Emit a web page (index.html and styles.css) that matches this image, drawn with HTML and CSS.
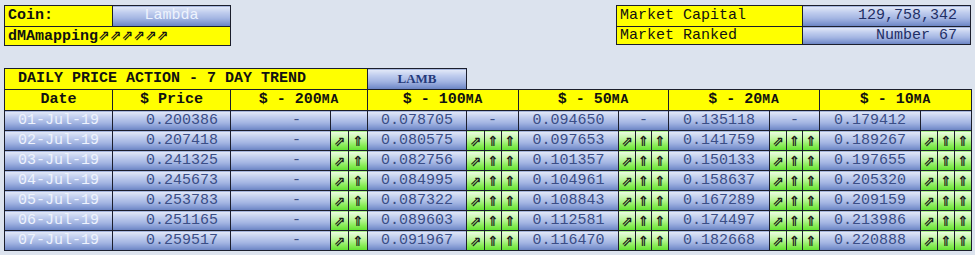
FILE: index.html
```html
<!DOCTYPE html>
<html>
<head>
<meta charset="utf-8">
<link rel="stylesheet" href="styles.css">
</head>
<body>
<div class="top">
  <table class="info info-left">
    <colgroup><col class="c108"><col class="c118"></colgroup>
    <tr class="r1"><td class="lbl">Coin:</td><td class="blue light center">Lambda</td></tr>
    <tr class="r2"><td class="lbl" colspan="2">dMAmapping<span class="arr">⇗⇗⇗⇗⇗⇗</span></td></tr>
  </table>
  <table class="info info-right">
    <colgroup><col class="c186"><col class="c168"></colgroup>
    <tr class="r1"><td class="lbl2">Market Capital</td><td class="blue val">129,758,342</td></tr>
    <tr class="r2"><td class="lbl2">Market Ranked</td><td class="blue val">Number 67</td></tr>
  </table>
</div>
<table class="grid">
  <colgroup>
    <col class="w108"><col class="w118">
    <col class="w100"><col class="w18"><col class="w19">
    <col class="w99"><col class="w18"><col class="w17"><col class="w17">
    <col class="w100"><col class="w17"><col class="w16"><col class="w17">
    <col class="w101"><col class="w17"><col class="w16"><col class="w17">
    <col class="w101"><col class="w17"><col class="w17"><col class="w17">
  </colgroup>
  <tr class="title">
    <td colspan="5" class="ttl">DAILY PRICE ACTION - 7 DAY TREND</td>
    <td class="blue lamb">LAMB</td>
    <td colspan="15" class="none"></td>
  </tr>
  <tr class="head">
    <td>Date</td><td>$ Price</td>
    <td colspan="3">$ - 200<span class="ma">MA</span></td>
    <td colspan="4">$ - 100<span class="ma">MA</span></td>
    <td colspan="4">$ - 50<span class="ma">MA</span></td>
    <td colspan="4">$ - 20<span class="ma">MA</span></td>
    <td colspan="4">$ - 10<span class="ma">MA</span></td>
  </tr>
  <tr class="row">
    <td class="blue date">01-Jul-19</td><td class="blue price">0.200386</td><td class="blue d200">-</td><td class="blue" colspan="2"></td>
    <td class="blue num">0.078705</td><td class="blue num" colspan="3">-</td>
    <td class="blue num">0.094650</td><td class="blue num" colspan="3">-</td>
    <td class="blue num">0.135118</td><td class="blue num" colspan="3">-</td>
    <td class="blue num">0.179412</td><td class="blue" colspan="3"></td>
  </tr>
  <tr class="row">
    <td class="blue date">02-Jul-19</td><td class="blue price">0.207418</td><td class="blue d200">-</td><td class="g">⇗</td><td class="g">⇑</td>
    <td class="blue num">0.080575</td><td class="g">⇗</td><td class="g">⇑</td><td class="g">⇑</td>
    <td class="blue num">0.097653</td><td class="g">⇗</td><td class="g">⇑</td><td class="g">⇑</td>
    <td class="blue num">0.141759</td><td class="g">⇗</td><td class="g">⇑</td><td class="g">⇑</td>
    <td class="blue num">0.189267</td><td class="g">⇗</td><td class="g">⇑</td><td class="g">⇑</td>
  </tr>
  <tr class="row">
    <td class="blue date">03-Jul-19</td><td class="blue price">0.241325</td><td class="blue d200">-</td><td class="g">⇗</td><td class="g">⇑</td>
    <td class="blue num">0.082756</td><td class="g">⇗</td><td class="g">⇑</td><td class="g">⇑</td>
    <td class="blue num">0.101357</td><td class="g">⇗</td><td class="g">⇑</td><td class="g">⇑</td>
    <td class="blue num">0.150133</td><td class="g">⇗</td><td class="g">⇑</td><td class="g">⇑</td>
    <td class="blue num">0.197655</td><td class="g">⇗</td><td class="g">⇑</td><td class="g">⇑</td>
  </tr>
  <tr class="row">
    <td class="blue date">04-Jul-19</td><td class="blue price">0.245673</td><td class="blue d200">-</td><td class="g">⇗</td><td class="g">⇑</td>
    <td class="blue num">0.084995</td><td class="g">⇗</td><td class="g">⇑</td><td class="g">⇑</td>
    <td class="blue num">0.104961</td><td class="g">⇗</td><td class="g">⇑</td><td class="g">⇑</td>
    <td class="blue num">0.158637</td><td class="g">⇗</td><td class="g">⇑</td><td class="g">⇑</td>
    <td class="blue num">0.205320</td><td class="g">⇗</td><td class="g">⇑</td><td class="g">⇑</td>
  </tr>
  <tr class="row">
    <td class="blue date">05-Jul-19</td><td class="blue price">0.253783</td><td class="blue d200">-</td><td class="g">⇗</td><td class="g">⇑</td>
    <td class="blue num">0.087322</td><td class="g">⇗</td><td class="g">⇑</td><td class="g">⇑</td>
    <td class="blue num">0.108843</td><td class="g">⇗</td><td class="g">⇑</td><td class="g">⇑</td>
    <td class="blue num">0.167289</td><td class="g">⇗</td><td class="g">⇑</td><td class="g">⇑</td>
    <td class="blue num">0.209159</td><td class="g">⇗</td><td class="g">⇑</td><td class="g">⇑</td>
  </tr>
  <tr class="row">
    <td class="blue date">06-Jul-19</td><td class="blue price">0.251165</td><td class="blue d200">-</td><td class="g">⇗</td><td class="g">⇑</td>
    <td class="blue num">0.089603</td><td class="g">⇗</td><td class="g">⇑</td><td class="g">⇑</td>
    <td class="blue num">0.112581</td><td class="g">⇗</td><td class="g">⇑</td><td class="g">⇑</td>
    <td class="blue num">0.174497</td><td class="g">⇗</td><td class="g">⇑</td><td class="g">⇑</td>
    <td class="blue num">0.213986</td><td class="g">⇗</td><td class="g">⇑</td><td class="g">⇑</td>
  </tr>
  <tr class="row">
    <td class="blue date">07-Jul-19</td><td class="blue price">0.259517</td><td class="blue d200">-</td><td class="g">⇗</td><td class="g">⇑</td>
    <td class="blue num">0.091967</td><td class="g">⇗</td><td class="g">⇑</td><td class="g">⇑</td>
    <td class="blue num">0.116470</td><td class="g">⇗</td><td class="g">⇑</td><td class="g">⇑</td>
    <td class="blue num">0.182668</td><td class="g">⇗</td><td class="g">⇑</td><td class="g">⇑</td>
    <td class="blue num">0.220888</td><td class="g">⇗</td><td class="g">⇑</td><td class="g">⇑</td>
  </tr>
</table>
</body>
</html>
```

FILE: styles.css
```css
html, body {
  margin: 0;
  padding: 0;
  background: #dce3ee;
}
body {
  padding: 5px 4px 0 4px;
  font-family: "Liberation Mono", "Courier New", monospace;
  font-size: 15px;
  color: #111;
}
table {
  border-collapse: collapse;
  table-layout: fixed;
}
td {
  border: 1px solid #1b1e2c;
  padding: 0;
  white-space: nowrap;
  overflow: hidden;
  line-height: 16px;
  vertical-align: middle;
}
.top {
  display: flex;
  justify-content: space-between;
  align-items: flex-start;
}
.info-left { width: 226px; }
.info-right { width: 354px; }
.c108 { width: 108px; }
.c118 { width: 118px; }
.c186 { width: 186px; }
.c168 { width: 168px; }
.info .r1 { height: 21px; }
.info .r2 { height: 18px; }
.lbl {
  background: #ffff00;
  font-weight: bold;
  padding-left: 3px;
  color: #111;
}
.lbl2 {
  background: #ffff00;
  padding-left: 3px;
  color: #111;
}
.arr {
  font-family: "DejaVu Sans", sans-serif;
  font-size: 14px;
  font-weight: bold;
}
.blue {
  background: linear-gradient(to bottom, #e4eaf8 0%, #c0cdee 30%, #a3b5e2 60%, #7f96d0 85%, #6780c0 100%);
  color: #3a4d86;
}
.light { color: #eef3fd; }
.center { text-align: center; }
.val {
  text-align: right;
  padding-right: 13px;
  color: #1f2f66;
}

.grid {
  width: 967px;
  margin-top: 22px;
}
.w108 { width: 108px; }
.w118 { width: 118px; }
.w100 { width: 100px; }
.w99 { width: 99px; }
.w101 { width: 101px; }
.w19 { width: 19px; }
.w18 { width: 18px; }
.w17 { width: 17px; }
.w16 { width: 16px; }
.title { height: 21px; }
.ttl {
  background: #ffff00;
  font-weight: bold;
  padding-left: 13px;
}
.lamb {
  font-family: "Liberation Serif", "Times New Roman", serif;
  font-weight: bold;
  font-size: 13px;
  text-align: center;
  color: #24397a;
}
td.none {
  border: none;
  background: transparent;
}
.head { height: 21px; }
.head td {
  background: #ffff00;
  font-weight: bold;
  text-align: center;
}
.ma {
  font-size: 13px;
  letter-spacing: 1px;
}
.row { height: 20px; }
.date {
  text-align: center;
  color: #eef3fd;
}
.price {
  text-align: right;
  padding-right: 12px;
}
.d200 {
  text-align: right;
  padding-right: 29px;
}
.num { text-align: center; }
.g {
  background: linear-gradient(to bottom, #eefee4 0%, #bff6a0 40%, #86ec55 75%, #62e030 100%);
  font-family: "DejaVu Sans", sans-serif;
  font-size: 14px;
  font-weight: bold;
  text-align: center;
  color: #1a1a1a;
}
```
